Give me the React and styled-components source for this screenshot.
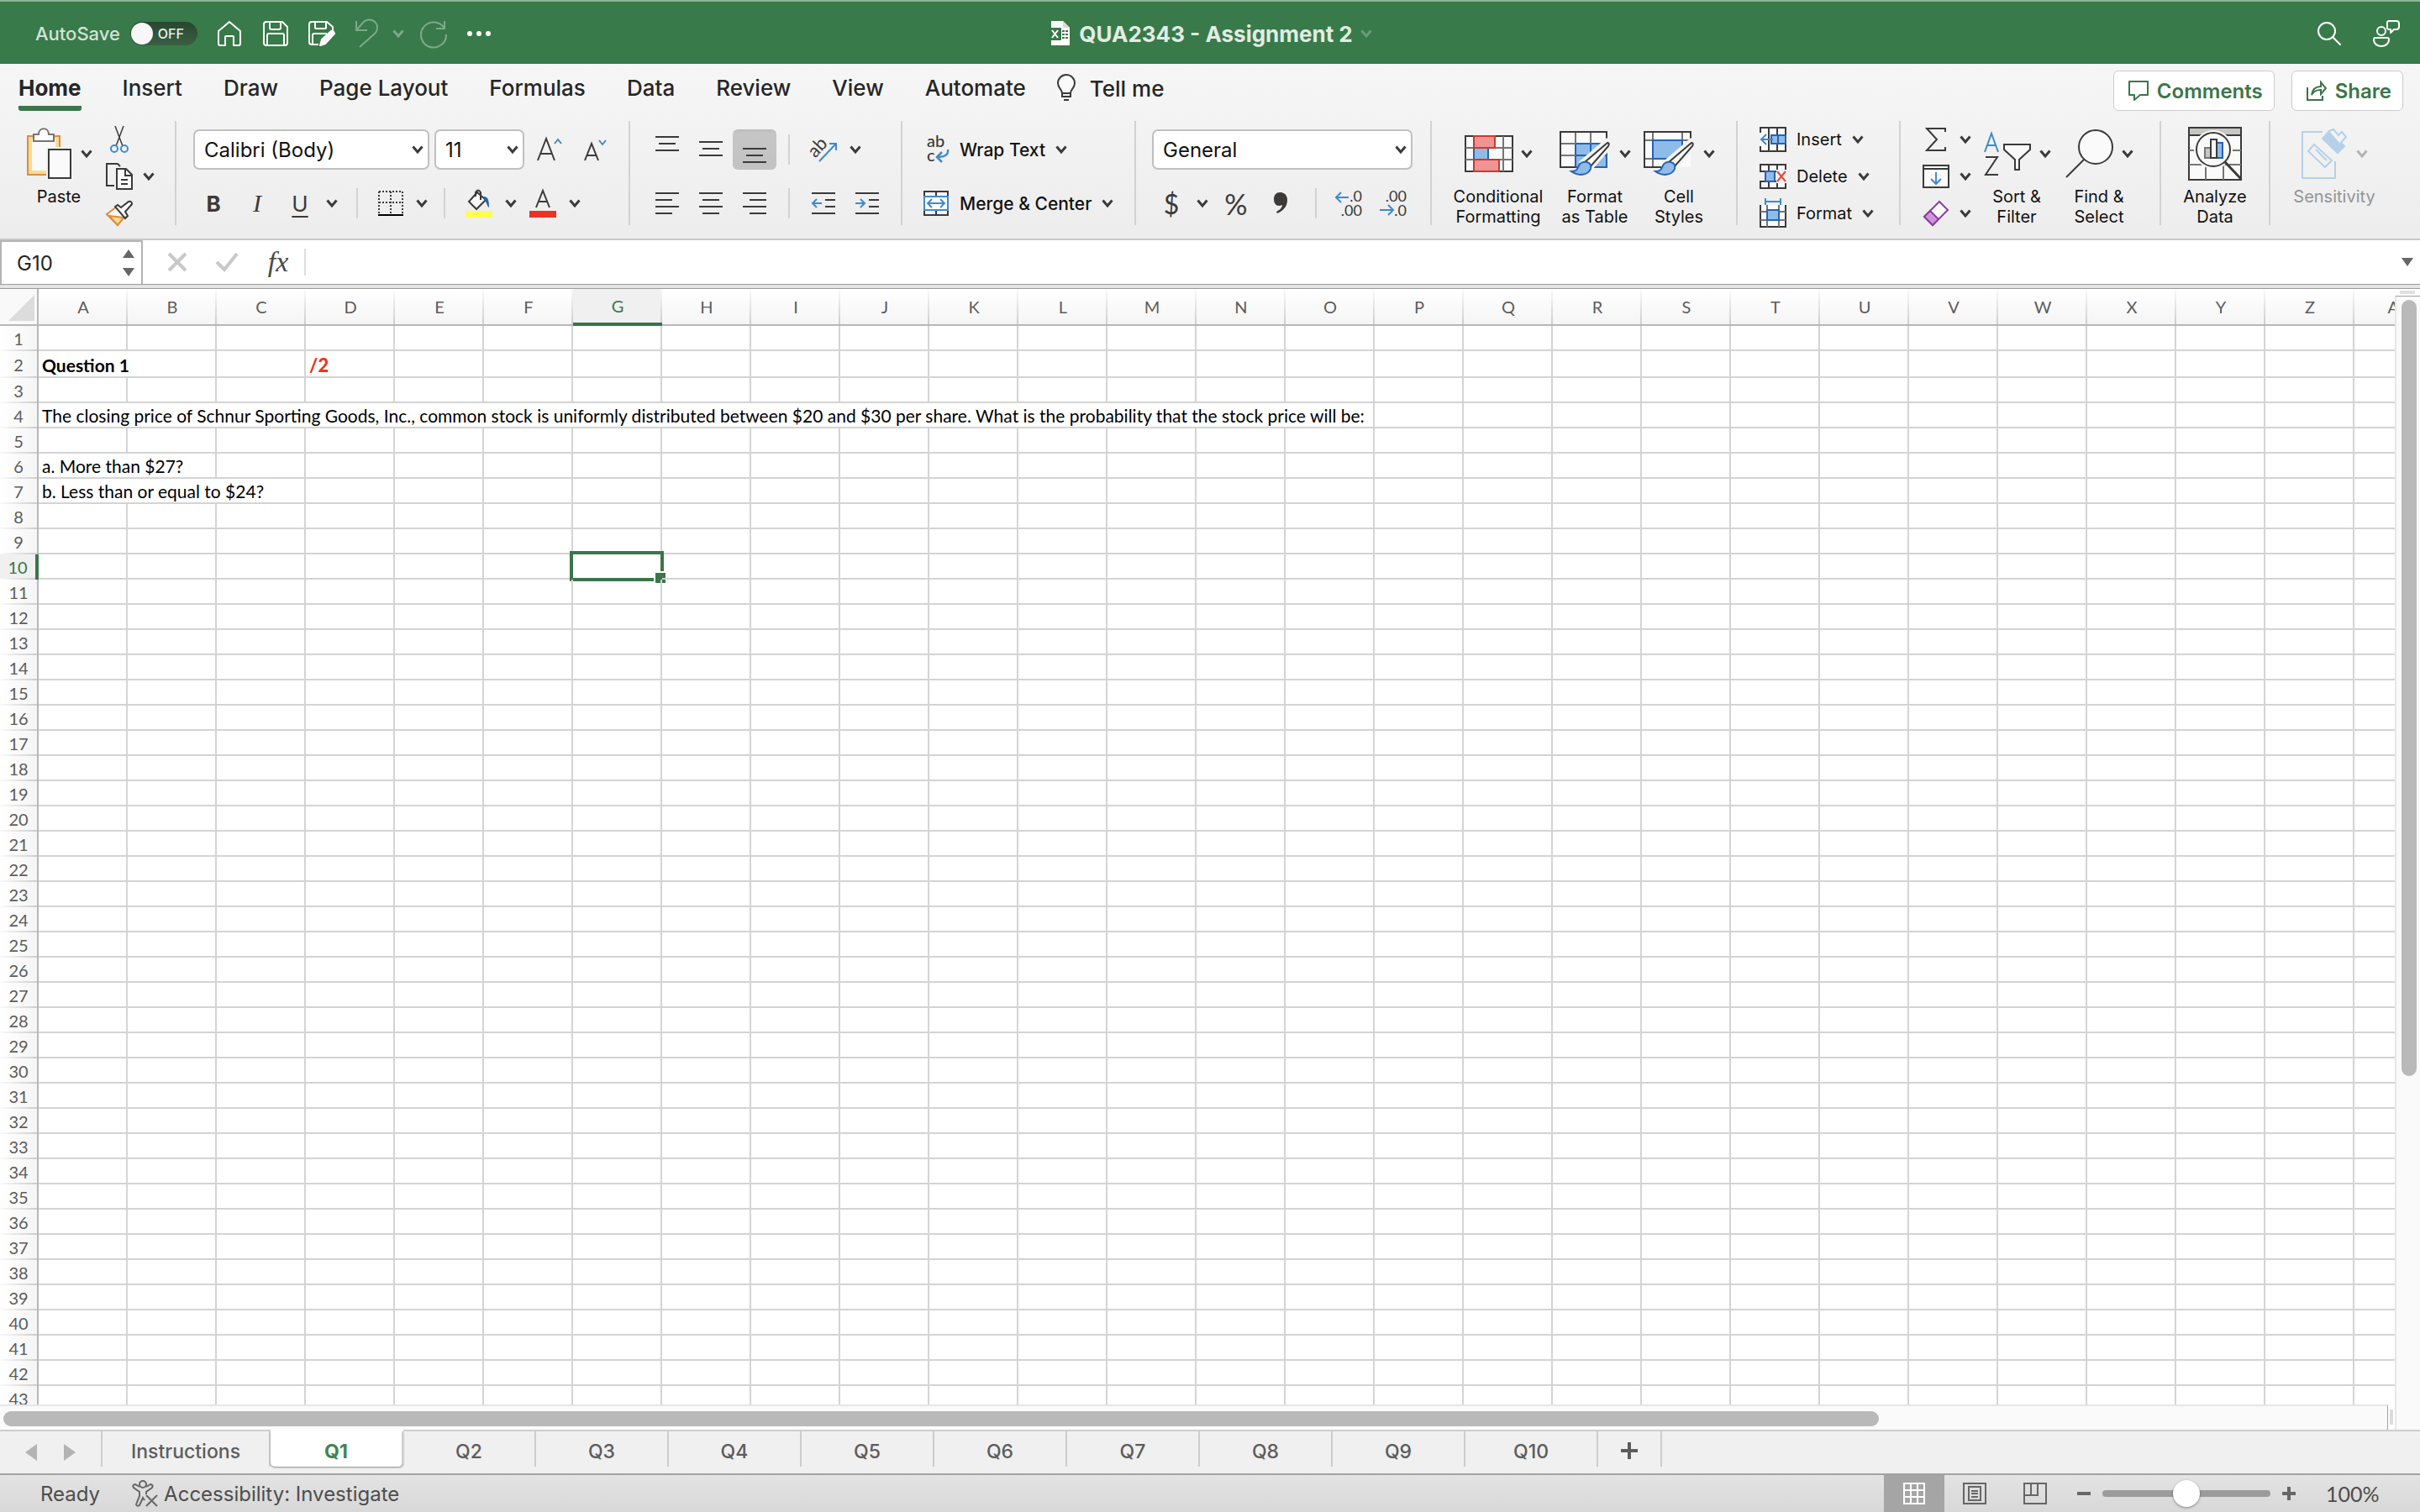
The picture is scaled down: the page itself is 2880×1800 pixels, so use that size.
import React, { useState } from 'react';
import styled, { createGlobalStyle, css } from 'styled-components';

const INK = '#3b3a39';
const BLUE = '#3f8acb';
const SKY = '#8fbbe8';
const NAVY = '#2563b0';
const GREEN = '#3b7549';

const TABS = ['Home', 'Insert', 'Draw', 'Page Layout', 'Formulas', 'Data', 'Review', 'View', 'Automate'];
const SHEETS = ['Instructions', 'Q1', 'Q2', 'Q3', 'Q4', 'Q5', 'Q6', 'Q7', 'Q8', 'Q9', 'Q10'];
const COLUMNS = [...'ABCDEFGHIJKLMNOPQRSTUVWXYZ', 'AA'];
const ROWS = Array.from({ length: 43 }, (_, i) => i + 1);

// text that runs over its neighbours takes their place with a span
const CELLS = {
  A2: { text: 'Question 1', span: 2, weight: 700 },
  D2: { text: '/2', span: 1, weight: 900, color: '#ea3323', size: 22 },
  A4: {
    text: 'The closing price of Schnur Sporting Goods, Inc., common stock is uniformly distributed between $20 and $30 per share. What is the probability that the stock price will be:',
    span: 15,
  },
  A6: { text: 'a. More than $27?', span: 2 },
  A7: { text: 'b. Less than or equal to $24?', span: 3 },
};

/* ---------- icons ---------- */

const Icon = ({ w = 32, h = 32, children, ...rest }) => (
  <Glyph width={w} height={h} viewBox={`0 0 ${w} ${h}`} fill="none" stroke={INK} strokeWidth="2" aria-hidden="true" {...rest}>
    {children}
  </Glyph>
);

const Chevron = ({ color = INK }) => (
  <Icon w={14} h={10} stroke={color} strokeWidth="3"><path d="M1.5 1.5L7 8l5.500-6.500" /></Icon>
);

const HomeIcon = () => (
  <Icon w={30} h={32} stroke="#fff" strokeLinejoin="round">
    <path d="M2 13L15 2l13 11v15a2 2 0 0 1-2 2h-6V20a1 1 0 0 0-1-1h-8a1 1 0 0 0-1 1v10H4a2 2 0 0 1-2-2z" />
  </Icon>
);

const SaveIcon = () => (
  <Icon w={30} h={30} stroke="#fff" strokeLinejoin="round">
    <path d="M4 1h19l6 6v19a3 3 0 0 1-3 3H4a3 3 0 0 1-3-3V4a3 3 0 0 1 3-3z" />
    <path d="M8 1v7a2 2 0 0 0 2 2h9a2 2 0 0 0 2-2V1M5 29V17a2 2 0 0 1 2-2h16a2 2 0 0 1 2 2v12" />
  </Icon>
);

const SaveEditIcon = () => (
  <Icon w={32} h={32} stroke="#fff" strokeLinejoin="round">
    <path d="M12 29H4a3 3 0 0 1-3-3V5a3 3 0 0 1 3-3h18l7 6v4" />
    <path d="M8 2v7a1 1 0 0 0 1 1h11a1 1 0 0 0 1-1V2M5 29V18a2 2 0 0 1 2-2h15" />
    <path d="M14 30l2-7L27 13q3-1 4 3L20 28z" fill="#fff" />
  </Icon>
);

const UndoIcon = () => (
  <Icon w={28} h={34} stroke="#7fa98a"><path d="M2 2v11h13M2 13L10 4a9.500 9.500 0 0 1 15 12L6 33" /></Icon>
);

const RedoIcon = () => (
  <Icon w={34} h={34} stroke="#7fa98a"><path d="M30 2v9H20M30 11a15 15 0 1 0 2 7" /></Icon>
);

const DotsIcon = () => (
  <Icon w={28} h={8} stroke="none" fill="#fff"><circle cx="3" cy="4" r="3" /><circle cx="14" cy="4" r="3" /><circle cx="25" cy="4" r="3" /></Icon>
);

const WorkbookIcon = () => (
  <Icon w={28} h={32} stroke="none">
    <path d="M4 1h14l8 8v21H4z" fill="#fff" />
    <path d="M18 1v8h8z" fill="#cfe0d3" />
    <path d="M17 12h3v2h-3zM21 12h3v2h-3zM17 16h3v2h-3zM21 16h3v2h-3zM17 20h3v2h-3zM21 20h3v2h-3z" fill={GREEN} />
    <rect x="1" y="9" width="15" height="15" rx="1" fill="#37784a" />
    <path d="M5 12l7 9M12 12l-7 9" stroke="#fff" strokeWidth="2" />
  </Icon>
);

const SearchIcon = () => (
  <Icon w={30} h={30} stroke="#fff" strokeLinecap="round"><circle cx="12" cy="12" r="10" /><path d="M19 19l9 9" /></Icon>
);

const PresenceIcon = () => (
  <Icon w={34} h={34} stroke="#fff" strokeLinejoin="round">
    <circle cx="11" cy="14" r="5" />
    <path d="M4 22h14a2 2 0 0 1 2 2c0 5-4 8-9 8s-9-3-9-8a2 2 0 0 1 2-2z" />
    <path d="M20 2h9a3 3 0 0 1 3 3v4a3 3 0 0 1-3 3h-3l-4 4v-4h-2a2 2 0 0 1-2-2V4a2 2 0 0 1 2-2z" />
  </Icon>
);

const BulbIcon = () => (
  <Icon w={24} h={32}>
    <path d="M7 22c0-5-5-6-5-12a10 10 0 0 1 20 0c0 6-5 7-5 12z" fill="#fafafa" />
    <path d="M7 22v4h10v-4M9 30h6" />
  </Icon>
);

const CommentIcon = () => (
  <Icon w={26} h={26} stroke={GREEN} strokeLinejoin="round"><path d="M2 2h22v16h-9l-7 6v-6H2z" /></Icon>
);

const ShareIcon = () => (
  <Icon w={26} h={26} stroke={GREEN}>
    <path d="M2 9v15h18v-5" />
    <path d="M7 18c1-7 5-10 11-10V3l6 7-6 7v-5c-5 0-8 1-11 6z" />
  </Icon>
);

const PasteIcon = () => (
  <Icon w={56} h={62}>
    <path d="M2 10h38v46H2z" fill="#f6dc94" stroke="#e08b3e" />
    <path d="M7 14h28v37H7z" fill="#fafafa" stroke="none" />
    <path d="M9 8h6c0-9 12-9 12 0h6v8H9z" fill="#fff" stroke="#767574" />
    <path d="M24 23h32v39H24z" fill="#f2f2f2" stroke="none" />
    <path d="M27 26h26v34H27z" fill="#fafafa" />
  </Icon>
);

const CutIcon = () => (
  <Icon w={22} h={34}>
    <path d="M6 1l9 24M16 1L7 25" strokeWidth="1.500" />
    <circle cx="5" cy="28" r="4" stroke={BLUE} /><circle cx="17" cy="28" r="4" stroke={BLUE} />
  </Icon>
);

const CopyIcon = () => (
  <Icon w={32} h={34}>
    <path d="M10 28H1V2h13l3 3" />
    <path d="M13 8h11l7 7v17H13z" fill="#fafafa" /><path d="M23 8v8h8M18 21h8M18 26h8" />
  </Icon>
);

const PainterIcon = () => (
  <Icon w={32} h={32}>
    <path d="M13 8L1 17l13 13 9-11z" fill="#fafafa" stroke="#e08b3e" />
    <path d="M4 19l17 2-7 9z" fill="#f6dc94" stroke="#e08b3e" />
    <path d="M11 8l3-2 4 3 9-7q4-1 4 3l-8 9 3 5-3 3z" fill="#fafafa" />
  </Icon>
);

const Sign = styled.span`
  font: 400 ${(p) => p.$size}px Lato, sans-serif;
  color: ${INK};
`;

const GrowIcon = ({ down }) => (
  <Icon w={32} h={32} strokeWidth="2">
    <path d={down ? 'M3 29l8-20 8 20M6 23h10' : 'M2 29l10-26 10 26M6 21h12'} />
    <path d={down ? 'M20 5l4 5 4-5' : 'M22 9l4-5 4 5'} stroke={BLUE} />
  </Icon>
);

const BordersIcon = () => (
  <Icon w={32} h={32}>
    <path d="M2 2h28M2 15h28" strokeDasharray="2 2" /><path d="M2 2v26M16 2v26M30 2v26" strokeDasharray="2 2" />
    <path d="M1 30h30" stroke="#000" strokeWidth="2" />
  </Icon>
);

const FillIcon = () => (
  <Icon w={32} h={34}>
    <path d="M14 4L4 15l9 9 11-11z" fill="#fafafa" /><path d="M12 9V4q3-5 6 0v9" />
    <path d="M22 9c5 0 6 5 6 13-3-2-2-6-6-9z" fill={NAVY} stroke="none" />
    <path d="M0 26h32v8H0z" fill="#fffd54" stroke="none" />
  </Icon>
);

const FontColorIcon = () => (
  <Icon w={32} h={34}>
    <path d="M8 22L16 2l8 20M11 15h10" /><path d="M0 26h32v8H0z" fill="#ea3323" stroke="none" />
  </Icon>
);

const VAlignIcon = ({ y }) => (
  <Icon w={28} h={34}><path d={`M0 ${y}h28M4 ${y + 8}h20M0 ${y + 16}h28`} /></Icon>
);

const HAlignIcon = ({ x }) => (
  <Icon w={28} h={28}><path d={`M0 2h28M${x} 10h20M0 18h28M${x} 26h20`} /></Icon>
);

const IndentIcon = ({ right }) => (
  <Icon w={28} h={28}>
    <path d="M0 2h28M16 10h12M16 18h12M0 26h28" />
    <path d={right ? 'M0 14h11M6 9l5 5-5 5' : 'M12 14H1M6 9l-5 5 5 5'} stroke={BLUE} />
  </Icon>
);

const OrientIcon = () => (
  <Icon w={34} h={34}>
    <text x="2" y="24" fontSize="22" fontFamily="Lato, sans-serif" fill={INK} stroke="none" transform="rotate(-47 9 20)">ab</text>
    <path d="M12 31L32 10M24 10h8v8" stroke={BLUE} />
  </Icon>
);

const WrapIcon = () => (
  <Icon w={32} h={34}>
    <text fontSize="20" fontFamily="Lato, sans-serif" fill={INK} stroke="none">
      <tspan x="5" y="14">ab</tspan>
      <tspan x="5" y="31">c</tspan>
    </text>
    <path d="M30 17c1 6-3 9-13 9M23 20l-6 6 6 6" stroke={BLUE} strokeWidth="2.500" />
  </Icon>
);

const MergeIcon = () => (
  <Icon w={32} h={32}>
    <path d="M2 2h28v28H2zM16 2v28" fill="#fafafa" />
    <path d="M2 8h28v16H2z" fill="#fff" stroke={BLUE} />
    <path d="M6 16h20M11 11l-5 5 5 5M21 11l5 5-5 5" stroke={BLUE} />
  </Icon>
);

const DecimalIcon = ({ less }) => (
  <Icon w={36} h={34} stroke={BLUE}>
    <g fontSize="18" fontFamily="Lato, sans-serif" fill={INK} stroke="none" textAnchor="end">
      <text x="34" y="15">{less ? '.00' : '.0'}</text><text x="34" y="32">{less ? '.0' : '.00'}</text>
    </g>
    <path d={less ? 'M2 25h16M12 19l6 6-6 6' : 'M18 10H3M9 4l-6 6 6 6'} />
  </Icon>
);

const CommaIcon = () => (
  <Icon w={18} h={26} stroke="none" fill={INK}><path d="M8 0c6 0 9 4 9 9 0 8-5 13-12 16l-1-2c4-2 7-5 7-8-6 3-10-1-10-7 0-5 3-8 7-8z" /></Icon>
);

const ConditionalIcon = () => (
  <Icon w={58} h={46}>
    <path d="M1 2h56v42H1z" fill="#fafafa" />
    <path d="M1 16h56M1 30h56M46 2v42" stroke="#767574" />
    <path d="M11 16h17v14H11z" fill={SKY} stroke={NAVY} />
    <path d="M11 2h25v14H11zM11 30h30v14H11z" fill="#f19394" stroke="#c93a2c" />
  </Icon>
);

const Brush = () => (
  <>
    <path d="M28 38L57 13q4 0 2 6L36 45z" fill="#fafafa" stroke="#f2f2f2" strokeWidth="7" />
    <path d="M30 38L57 15q3 0 1 4L37 43z" fill="#fafafa" />
    <path d="M14 49c7 0 7-3 9-7 3-7 17-5 14 4-3 8-15 9-23 3z" fill={SKY} stroke={NAVY} />
  </>
);

const FormatTableIcon = () => (
  <Icon w={62} h={56}>
    <path d="M1 2h55v42H1z" fill="#fafafa" />
    <path d="M19 16h37v28H19z" fill={SKY} stroke={NAVY} />
    <path d="M1 16h18M1 30h18M19 2v14M37 2v14" stroke="#767574" /><path d="M19 30h37M37 16v28" stroke={NAVY} />
    <path d="M1 2h55v8M1 2v42h18" />
    <Brush />
  </Icon>
);

const CellStylesIcon = () => (
  <Icon w={62} h={56}>
    <path d="M1 2h55v42H1z" fill="#fafafa" stroke="none" />
    <path d="M1 12h55M11 2v42M46 2v10M1 34h20" stroke="#767574" />
    <path d="M11 12h35v22H11z" fill={SKY} stroke={NAVY} />
    <path d="M56 12V2H1v42h20" />
    <Brush />
  </Icon>
);

const InsertIcon = () => (
  <Icon>
    <path d="M1 8V2h30v28H1v-6M11 2v28M21 2v28" fill="#fafafa" />
    <path d="M14 11h17v10H14z" fill={SKY} stroke={NAVY} />
    <path d="M22 11v10" stroke={NAVY} />
    <path d="M2 16h14M8 10l-6 6 6 6" stroke={BLUE} />
  </Icon>
);

const DeleteIcon = () => (
  <Icon>
    <path d="M1 10V2h30v8H1zM1 22v8h30v-8zM11 2v8M21 2v8M11 22v8M21 22v8" fill="#fafafa" />
    <path d="M7 10h11v12H7z" fill={SKY} stroke={NAVY} />
    <path d="M20 8h12v16H20z" fill="#f2f2f2" stroke="none" />
    <path d="M21 10l10 12M31 10L21 22" stroke="#e0483e" />
  </Icon>
);

const FormatIcon = () => (
  <Icon w={32} h={36}>
    <path d="M1 8v26h30V8" fill="#fafafa" /><path d="M1 16h30M1 26h30M9 8v26M23 8v26" stroke="#767574" />
    <path d="M9 14h14v12H9z" fill={SKY} stroke={NAVY} /><path d="M7 4h18M7 0v8M25 0v8" stroke={BLUE} />
  </Icon>
);

const SumIcon = () => (
  <Icon w={26} h={30}><path d="M24 6V2H2l12 13L2 28h22v-4" /></Icon>
);

const FillDownIcon = () => (
  <Icon w={32} h={30}>
    <path d="M1 2h30v26H1z" fill="#fafafa" /><path d="M1 6h30" />
    <path d="M16 10v14M10 18l6 6 6-6" stroke={BLUE} />
  </Icon>
);

const EraserIcon = () => (
  <Icon w={32} h={32} stroke="#8b3fa0">
    <path d="M2 20L20 2l10 10-18 18z" fill="#fafafa" /><path d="M2 20l7-7 10 10-7 7z" fill="#cf95dc" />
  </Icon>
);

const SortIcon = () => (
  <Icon w={58} h={56}>
    <path d="M2 26l8-22 8 22M5 18h10" stroke={BLUE} />
    <path d="M3 32h14L3 53h15" />
    <path d="M25 17h31v6L43 35v12h-5V35L25 23z" fill="#fafafa" />
  </Icon>
);

const FindIcon = () => (
  <Icon w={58} h={60}><circle cx="36" cy="22" r="20" fill="#fafafa" /><path d="M22 37L1 58" /></Icon>
);

const AnalyzeIcon = () => (
  <Icon w={64} h={66}>
    <path d="M1 2h62v62H1z" fill="#fafafa" /><path d="M1 2h62v9H1z" fill="#c6c6c4" />
    <path d="M1 29h62M1 46h62M21 46v18M42 46v18" stroke="#767574" />
    <circle cx="30" cy="28" r="23" fill="#fafafa" stroke="none" />
    <circle cx="30" cy="28" r="20" fill="#fafafa" />
    <path d="M20 26h7v12h-7z" fill="#c6c6c4" stroke="#767574" /><path d="M34 20h7v18h-7z" fill={SKY} stroke={NAVY} />
    <path d="M27 16h7v22h-7z" fill="#fafafa" />
    <path d="M44 43l19 20" strokeWidth="3" />
  </Icon>
);

const SensitivityIcon = () => (
  <Icon w={56} h={62} stroke="#b5d0e8">
    <path d="M40 40v20H1V5h24" />
    <path d="M15 20l21 19-8 8L8 28zM17 26l13 13" />
    <path d="M25 13l8-9 18 18-8 8z" fill="#b5d0e8" /><path d="M33 4l5-2 6 7 4-4 5 6-7 8" fill="#f2f2f2" />
  </Icon>
);

const AccessIcon = () => (
  <Icon w={32} h={32} stroke="#666">
    <circle cx="13" cy="5" r="4" />
    <path d="M9 8L4 5q-4 1-2 4l7 5v5L5 29q1 3 4 1l4-9 2 3M17 8l5-3q4 1 2 4l-7 5v3M17 18l13 13M30 18L17 31" />
  </Icon>
);

const GridViewIcon = () => (
  <Icon w={28} h={28} stroke="#fff"><path d="M2 2h24v24H2zM2 10h24M2 18h24M10 2v24M18 2v24" /></Icon>
);

const PageViewIcon = () => (
  <Icon w={28} h={28} stroke="#666"><path d="M1 2h26v24H1zM7 6h14v16H7zM10 11h8M10 14h8M10 18h8" /></Icon>
);

const BreakViewIcon = () => (
  <Icon w={28} h={28} stroke="#666"><path d="M1 2h26v24H1zM1 16h16V2M9 2v14" /></Icon>
);

const Triangle = ({ d, w = 14, h = 10, color = '#666' }) => (
  <Icon w={w} h={h} stroke="none" fill={color}><path d={d} /></Icon>
);

/* ---------- pieces ---------- */

const Select = ({ label, value, width }) => (
  <Field $w={width}>
    <select aria-label={label} defaultValue={value}><option>{value}</option></select>
    <Chevron />
  </Field>
);

const Big = ({ icon, label, width = 88, caret = true, disabled }) => (
  <BigButton $w={width} disabled={disabled}>
    <BigIcon>{icon}{caret && <Chevron color={disabled ? '#b3b3b3' : INK} />}</BigIcon>
    <span>{label}</span>
  </BigButton>
);

const Caret = ({ label, width = 24 }) => <Tool $w={width} aria-label={label}><Chevron /></Tool>;

const TitleArea = () => (
  <TitleBar>
    <QuickBar>
      <AutoSave>
        AutoSave
        <Switch><input type="checkbox" role="switch" /><span>OFF</span></Switch>
      </AutoSave>
      <BarButton $w={56} aria-label="Home"><HomeIcon /></BarButton>
      <BarButton $w={54} aria-label="Save"><SaveIcon /></BarButton>
      <BarButton $w={56} aria-label="Save as"><SaveEditIcon /></BarButton>
      <BarButton $w={50} aria-label="Undo"><UndoIcon /></BarButton>
      <BarButton $w={26} aria-label="Undo list"><Chevron color="#7fa98a" /></BarButton>
      <BarButton $w={58} aria-label="Redo"><RedoIcon /></BarButton>
      <BarButton $w={50} aria-label="More"><DotsIcon /></BarButton>
    </QuickBar>
    <DocTitle>
      <WorkbookIcon />
      <h1>QUA2343 - Assignment 2</h1>
      <Chevron color="#6b9c78" />
    </DocTitle>
    <RightBar>
      <BarButton $w={68} aria-label="Search"><SearchIcon /></BarButton>
      <BarButton $w={68} aria-label="Collaborators"><PresenceIcon /></BarButton>
    </RightBar>
  </TitleBar>
);

const RibbonArea = () => {
  const [tab, setTab] = useState('Home');

  return (
    <Ribbon>
      <TabRow>
        <TabList>
          {TABS.map((name) => (
            <Tab key={name} $active={name === tab} onClick={() => setTab(name)}>{name}</Tab>
          ))}
        </TabList>
        <TellMe><BulbIcon />Tell me</TellMe>
        <TabActions>
          <ActionButton><CommentIcon />Comments</ActionButton>
          <ActionButton><ShareIcon />Share</ActionButton>
        </TabActions>
      </TabRow>

      <Groups>
        <Group $w={208} $pad={22} $gap={8}>
          <Big icon={<PasteIcon />} label="Paste" width={96} />
          <ToolStack>
            <StackRow aria-label="Cut"><Slot><CutIcon /></Slot></StackRow>
            <StackRow aria-label="Copy"><Slot><CopyIcon /></Slot><Chevron /></StackRow>
            <StackRow aria-label="Format painter"><Slot><PainterIcon /></Slot></StackRow>
          </ToolStack>
        </Group>
        <Divider $tall />

        <Group $w={538} $pad={20}>
          <Rows>
            <ToolRow>
              <Select label="Font" value="Calibri (Body)" width={281} />
              <FieldGap />
              <Select label="Font size" value="11" width={107} />
              <Tool $w={60} aria-label="Increase font size"><GrowIcon /></Tool>
              <Tool $w={50} aria-label="Decrease font size"><GrowIcon down /></Tool>
            </ToolRow>
            <ToolRow>
              <Tool $w={48}><b>B</b></Tool>
              <Tool $w={56}><Serif>I</Serif></Tool>
              <Tool $w={46}><u>U</u></Tool>
              <Caret label="Underline style" width={30} />
              <Divider />
              <Tool $w={50} aria-label="Borders"><BordersIcon /></Tool>
              <Caret label="Border list" />
              <Divider />
              <Tool $w={52} aria-label="Fill color"><FillIcon /></Tool>
              <Caret label="Fill colors" />
              <Tool $w={52} aria-label="Font color"><FontColorIcon /></Tool>
              <Caret label="Font colors" />
            </ToolRow>
          </Rows>
        </Group>
        <Divider $tall />

        <Group $w={322} $pad={18}>
          <Rows>
            <ToolRow>
              <Tool $w={52} aria-label="Top align"><VAlignIcon y={2} /></Tool>
              <Tool $w={52} aria-label="Middle align"><VAlignIcon y={8} /></Tool>
              <Tool $w={52} $on aria-label="Bottom align"><VAlignIcon y={16} /></Tool>
              <Divider />
              <Tool $w={52} aria-label="Orientation"><OrientIcon /></Tool>
              <Caret label="Orientation list" />
            </ToolRow>
            <ToolRow>
              <Tool $w={52} aria-label="Align left"><HAlignIcon x={0} /></Tool>
              <Tool $w={52} aria-label="Center"><HAlignIcon x={4} /></Tool>
              <Tool $w={52} aria-label="Align right"><HAlignIcon x={8} /></Tool>
              <Divider />
              <Tool $w={52} aria-label="Decrease indent"><IndentIcon /></Tool>
              <Tool $w={52} aria-label="Increase indent"><IndentIcon right /></Tool>
            </ToolRow>
          </Rows>
        </Group>
        <Divider $tall />

        <Group $w={276} $pad={24}>
          <Rows>
            <TextTool><Slot><WrapIcon /></Slot>Wrap Text<Chevron /></TextTool>
            <TextTool><Slot><MergeIcon /></Slot>Merge &amp; Center<Chevron /></TextTool>
          </Rows>
        </Group>
        <Divider $tall />

        <Group $w={350} $pad={19}>
          <Rows>
            <ToolRow><Select label="Number format" value="General" width={310} /></ToolRow>
            <ToolRow>
              <Tool $w={46} aria-label="Currency"><Sign $size={32}>$</Sign></Tool>
              <Caret label="Currency list" width={28} />
              <Tool $w={52} aria-label="Percent"><Sign $size={34}>%</Sign></Tool>
              <Tool $w={54} aria-label="Comma style"><CommaIcon /></Tool>
              <Divider />
              <Tool $w={48} aria-label="Increase decimal"><DecimalIcon /></Tool>
              <Tool $w={58} aria-label="Decrease decimal"><DecimalIcon less /></Tool>
            </ToolRow>
          </Rows>
        </Group>
        <Divider $tall />

        <Group $w={362} $pad={20}>
          <Big icon={<ConditionalIcon />} label="Conditional Formatting" width={118} />
          <Big icon={<FormatTableIcon />} label="Format as Table" />
          <Big icon={<CellStylesIcon />} label={<>Cell<br />Styles</>} />
        </Group>
        <Divider $tall />

        <Group $w={192} $pad={26}>
          <ToolStack>
            <StackRow><Slot><InsertIcon /></Slot>Insert<Chevron /></StackRow>
            <StackRow><Slot><DeleteIcon /></Slot>Delete<Chevron /></StackRow>
            <StackRow><Slot><FormatIcon /></Slot>Format<Chevron /></StackRow>
          </ToolStack>
        </Group>
        <Divider $tall />

        <Group $w={308} $pad={26} $gap={10}>
          <ToolStack>
            <StackRow aria-label="AutoSum"><Slot><SumIcon /></Slot><Chevron /></StackRow>
            <StackRow aria-label="Fill"><Slot><FillDownIcon /></Slot><Chevron /></StackRow>
            <StackRow aria-label="Clear"><Slot><EraserIcon /></Slot><Chevron /></StackRow>
          </ToolStack>
          <Big icon={<SortIcon />} label={<>Sort &amp;<br />Filter</>} />
          <Big icon={<FindIcon />} label={<>Find &amp;<br />Select</>} />
        </Group>
        <Divider $tall />

        <Group $w={128} $pad={20}>
          <Big icon={<AnalyzeIcon />} label="Analyze Data" caret={false} />
        </Group>
        <Divider $tall />

        <Group $w={160} $pad={20}>
          <Big icon={<SensitivityIcon />} label="Sensitivity" width={112} disabled />
        </Group>
      </Groups>
    </Ribbon>
  );
};

const FormulaArea = () => (
  <FormulaBar>
    <NameBox>
      <input aria-label="Name box" defaultValue="G10" />
      <Steppers><Triangle d="M7 0l7 10H0z" /><Triangle d="M0 0h14L7 10z" /></Steppers>
    </NameBox>
    <BarButton $w={58} aria-label="Cancel"><Icon w={24} h={24} stroke="#c8c8c8" strokeWidth="4"><path d="M2 2l20 20M22 2L2 22" /></Icon></BarButton>
    <BarButton $w={60} aria-label="Enter"><Icon w={28} h={24} stroke="#c8c8c8" strokeWidth="4"><path d="M2 12l9 9L26 2" /></Icon></BarButton>
    <BarButton $w={62} aria-label="Insert function"><Fx>fx</Fx></BarButton>
    <FormulaInput aria-label="Formula" />
    <BarButton $w={30} aria-label="Expand"><Triangle d="M0 0h14L7 10z" /></BarButton>
  </FormulaBar>
);

const SheetRow = ({ row }) => {
  const cells = [];
  for (let i = 0; i < COLUMNS.length; i++) {
    const key = COLUMNS[i] + row;
    const cell = CELLS[key];
    cells.push(
      <Cell key={key} colSpan={cell?.span} $weight={cell?.weight} $color={cell?.color} $size={cell?.size}>
        {cell?.text}
        {key === 'G10' && <Selection />}
      </Cell>
    );
    if (cell) i += cell.span - 1;
  }
  return (
    <SheetLine $h={row === 2 ? 32 : 30}>
      <RowHead scope="row" $on={row === 10}>{row}</RowHead>
      {cells}
    </SheetLine>
  );
};

const App = () => {
  const [sheet, setSheet] = useState('Q1');

  return (
    <Page>
      <GlobalStyle />
      <TitleArea />
      <RibbonArea />
      <FormulaArea />
      <SplitBar />

      <Workspace>
        <SheetPane>
          <GridClip>
            <Grid>
              <colgroup>
                <col width="46" />
                {COLUMNS.map((c) => <col key={c} width="106" />)}
              </colgroup>
              <thead>
                <tr>
                  <Corner><Icon w={32} h={32} stroke="none" fill="#dcdcdc"><path d="M31 0v31H0z" /></Icon></Corner>
                  {COLUMNS.map((c) => <ColHead key={c} scope="col" $on={c === 'G'}>{c}</ColHead>)}
                </tr>
              </thead>
              <tbody>{ROWS.map((r) => <SheetRow key={r} row={r} />)}</tbody>
            </Grid>
          </GridClip>
          <HScroll><HTrack><HThumb /></HTrack><HHandle /></HScroll>
        </SheetPane>
        <VScroll><VHandle /><VTrack><VThumb /></VTrack></VScroll>
      </Workspace>

      <SheetTabs>
        <SheetNav>
          <button aria-label="Previous sheet"><Triangle w={14} h={20} color="#b3b3b3" d="M14 0v20L0 10z" /></button>
          <button aria-label="Next sheet"><Triangle w={14} h={20} color="#b3b3b3" d="M0 0v20l14-10z" /></button>
        </SheetNav>
        {SHEETS.map((name) => (
          <SheetTab key={name} $wide={name === 'Instructions'} $active={name === sheet} onClick={() => setSheet(name)}>
            {name}
          </SheetTab>
        ))}
        <AddSheet aria-label="Add sheet">
          <Icon w={20} h={20} stroke="#5c5c5c" strokeWidth="4"><path d="M10 0v20M0 10h20" /></Icon>
        </AddSheet>
      </SheetTabs>

      <StatusBar>
        <Ready>Ready</Ready>
        <Access><AccessIcon />Accessibility: Investigate</Access>
        <ViewButton $on aria-label="Normal view"><GridViewIcon /></ViewButton>
        <ViewButton aria-label="Page layout view"><PageViewIcon /></ViewButton>
        <ViewButton aria-label="Page break view"><BreakViewIcon /></ViewButton>
        <ZoomButton aria-label="Zoom out"><Icon w={16} h={16} stroke="#666" strokeWidth="4"><path d="M0 8h16" /></Icon></ZoomButton>
        <ZoomSlider type="range" aria-label="Zoom" min="0" max="200" defaultValue="100" />
        <ZoomButton aria-label="Zoom in"><Icon w={16} h={16} stroke="#666" strokeWidth="4"><path d="M0 8h16M8 0v16" /></Icon></ZoomButton>
        <Percent>100%</Percent>
      </StatusBar>
    </Page>
  );
};

/* ---------- styles ---------- */

const GlobalStyle = createGlobalStyle`
  * { box-sizing: border-box; }
  body {
    margin: 0;
    font-family: Inter, "Liberation Sans", sans-serif;
    color: #262626;
    background: #fff;
  }
  button, input, select {
    font: inherit;
    color: inherit;
    margin: 0;
    padding: 0;
    border: 0;
    background: none;
    outline: none;
  }
`;

const Page = styled.div`
  display: flex;
  flex-direction: column;
  height: 100vh;
  overflow: hidden;
`;

const Glyph = styled.svg`
  display: block;
  flex: none;
  overflow: visible;
`;

const TitleBar = styled.header`
  display: grid;
  grid-template-columns: 1fr auto 1fr;
  align-items: center;
  height: 76px;
  padding-top: 2px;
  flex: none;
  border-top: 2px solid #8fb39a;
  background: #387a49;
  color: #e2ece4;
`;

const QuickBar = styled.div`
  display: flex;
  align-items: center;
  padding-left: 42px;
`;

const BarButton = styled.button`
  display: flex;
  align-items: center;
  justify-content: center;
  flex: none;
  width: ${(p) => p.$w}px;
`;

const AutoSave = styled.label`
  display: flex;
  align-items: center;
  gap: 12px;
  margin-right: 10px;
  font-size: 22px;
  font-weight: 500;
  color: #d3e2d7;
`;

const Switch = styled.span`
  display: grid;
  align-items: center;
  width: 80px;

  input {
    appearance: none;
    grid-area: 1 / 1;
    height: 28px;
    padding: 1px;
    border-radius: 14px;
    background: linear-gradient(#27472f, #3a5f44);
  }

  input::before {
    content: '';
    display: block;
    width: 26px;
    height: 26px;
    border-radius: 50%;
    background: #f7f7f7;
  }

  span {
    grid-area: 1 / 1;
    justify-self: end;
    padding-right: 16px;
    font-size: 16px;
    color: #e8efe9;
    pointer-events: none;
  }
`;

const DocTitle = styled.div`
  display: flex;
  align-items: center;
  gap: 9px;

  h1 {
    margin: 0;
    font-size: 26px;
    font-weight: 700;
  }
`;

const RightBar = styled.div`
  display: flex;
  justify-content: flex-end;
  padding-right: 6px;
`;

const Ribbon = styled.section`
  flex: none;
  border-bottom: 2px solid #c8c8c8;
  background: linear-gradient(#f6f6f6, #ededed);
`;

const TabRow = styled.nav`
  display: flex;
  gap: 36px;
  height: 68px;
  padding: 0 20px 0 22px;
`;

const TabList = styled.div`
  display: flex;
  gap: 49px;
`;

const Tab = styled.button`
  height: 56px;
  padding-top: 7px;
  border-bottom: 6px solid ${(p) => (p.$active ? GREEN : 'transparent')};
  border-radius: 3px;
  font-size: 26px;
  font-weight: ${(p) => (p.$active ? 700 : 500)};
`;

const TellMe = styled.button`
  display: flex;
  align-items: center;
  gap: 16px;
  height: 58px;
  font-size: 26px;
  font-weight: 500;
`;

const TabActions = styled.div`
  display: flex;
  gap: 20px;
  margin-left: auto;
  padding-top: 8px;
`;

const ActionButton = styled.button`
  display: flex;
  align-items: center;
  gap: 9px;
  height: 48px;
  padding: 0 13px 0 16px;
  border: 1px solid #cbcbcb;
  border-radius: 6px;
  background: #fff;
  font-size: 24px;
  font-weight: 600;
  color: ${GREEN};
`;

const Groups = styled.div`
  display: flex;
  height: 140px;
`;

const Group = styled.div`
  display: flex;
  gap: ${(p) => p.$gap || 12}px;
  flex: none;
  width: ${(p) => p.$w}px;
  padding-left: ${(p) => p.$pad}px;
`;

const Divider = styled.span`
  flex: none;
  width: 2px;
  background: #d2d2d2;
  ${(p) => (p.$tall
    ? css`height: 124px;`
    : css`height: 36px; margin: 0 14px;`)}
`;

const Rows = styled.div`
  display: flex;
  flex-direction: column;
  gap: 16px;
  padding-top: 10px;
`;

const ToolRow = styled.div`
  display: flex;
  align-items: center;
  height: 48px;
`;

const FieldGap = styled.span`
  width: 6px;
`;

const Field = styled.span`
  display: grid;
  align-items: center;
  width: ${(p) => p.$w}px;
  height: 48px;

  select {
    appearance: none;
    grid-area: 1 / 1;
    height: 48px;
    padding-left: 11px;
    border: 2px solid #c0c0c0;
    border-radius: 7px;
    background: #fff;
    font-size: 24px;
    color: #111;
  }

  svg {
    grid-area: 1 / 1;
    justify-self: end;
    margin-right: 7px;
    pointer-events: none;
  }
`;

const Tool = styled.button`
  display: flex;
  align-items: center;
  justify-content: center;
  flex: none;
  width: ${(p) => p.$w}px;
  height: 48px;
  font-size: 26px;
  color: ${INK};

  ${(p) => p.$on && css`
    border-radius: 6px;
    background: linear-gradient(#bcbcbc, #c6c6c6 10%, #c2c2c2);
  `}

  u {
    text-underline-offset: 5px;
  }
`;

const Serif = styled.i`
  font-family: "Liberation Serif", serif;
  font-size: 30px;
`;

const Slot = styled.span`
  display: flex;
  justify-content: center;
  width: 32px;
`;

const TextTool = styled.button`
  display: flex;
  align-items: center;
  gap: 12px;
  height: 48px;
  font-size: 21px;
  font-weight: 500;
  color: #111;
`;

const ToolStack = styled.div`
  display: flex;
  flex-direction: column;
`;

const StackRow = styled.button`
  display: flex;
  align-items: center;
  gap: 12px;
  height: 44px;
  font-size: 20px;
  color: #111;
`;

const BigButton = styled.button`
  display: flex;
  flex-direction: column;
  align-items: center;
  gap: 6px;
  flex: none;
  width: ${(p) => p.$w}px;
  height: 130px;
  padding-top: 6px;
  font-size: 20px;
  line-height: 24px;
  color: ${(p) => (p.disabled ? '#949494' : '#111')};
`;

const BigIcon = styled.span`
  display: flex;
  align-items: center;
  gap: 9px;
  height: 66px;
`;

const FormulaBar = styled.div`
  display: flex;
  align-items: center;
  flex: none;
  height: 52px;
  background: #fff;
`;

const NameBox = styled.div`
  display: flex;
  align-items: center;
  align-self: stretch;
  width: 170px;
  margin-right: 12px;
  padding: 0 8px 0 18px;
  border: 2px solid #b4b4b4;
  border-bottom: 0;

  input {
    flex: 1;
    min-width: 0;
    font-size: 24px;
  }
`;

const Steppers = styled.span`
  display: flex;
  flex-direction: column;
  gap: 12px;
`;

const Fx = styled.i`
  font-family: "Liberation Serif", serif;
  font-size: 34px;
  color: #4a4a4a;
`;

const FormulaInput = styled.input`
  flex: 1;
  height: 32px;
  margin-right: 6px;
  border-left: 2px solid #dedede;
`;

const SplitBar = styled.div`
  flex: none;
  height: 6px;
  border: solid #9c9c9c;
  border-width: 1px 0;
  background: #e4e4e4;
`;

const Workspace = styled.main`
  display: flex;
  flex: 1;
  min-height: 0;
`;

const SheetPane = styled.div`
  display: flex;
  flex-direction: column;
  flex: 1;
  min-width: 0;
`;

const GridClip = styled.div`
  flex: 1;
  overflow: hidden;
`;

const Grid = styled.table`
  width: 2908px;
  table-layout: fixed;
  border-spacing: 0;
  font-family: Lato, "Noto Sans", sans-serif;
`;

const Corner = styled.td`
  height: 44px;
  padding: 4px 0 0 10px;
  border-right: 2px solid #b8b8b8;
  border-bottom: 2px solid #b8b8b8;
  background: #f9f9f9;
`;

const ColHead = styled.th`
  height: 44px;
  padding: 0;
  border-bottom: ${(p) => (p.$on ? `4px solid ${GREEN}` : '2px solid #b8b8b8')};
  background:
    linear-gradient(#fafafa, #cdcdcd) right / 2px 100% no-repeat,
    ${(p) => (p.$on ? '#f0f0f0' : 'linear-gradient(#fff, #f5f5f5)')};
  font-size: 20px;
  font-weight: 400;
  color: ${(p) => (p.$on ? GREEN : '#5c5c5c')};
`;

const SheetLine = styled.tr`
  height: ${(p) => p.$h}px;
`;

const RowHead = styled.th`
  padding: 0;
  border-right: ${(p) => (p.$on ? `4px solid ${GREEN}` : '2px solid #b8b8b8')};
  background:
    linear-gradient(90deg, #fafafa, #cdcdcd) bottom / 100% 2px no-repeat,
    ${(p) => (p.$on ? '#f0f0f0' : 'linear-gradient(90deg, #fff, #f5f5f5)')};
  font-size: 20px;
  font-weight: 400;
  line-height: 28px;
  color: ${(p) => (p.$on ? GREEN : '#5c5c5c')};
`;

const Cell = styled.td`
  position: relative;
  padding: 0 0 0 4px;
  border: solid #d4d4d4;
  border-width: 0 2px 2px 0;
  vertical-align: bottom;
  white-space: nowrap;
  font-size: ${(p) => p.$size || 21}px;
  font-weight: ${(p) => p.$weight || 400};
  line-height: 26px;
  color: ${(p) => p.$color || '#000'};
`;

const Selection = styled.div`
  position: absolute;
  inset: -4px;
  border: 4px solid ${GREEN};

  &::after {
    content: '';
    position: absolute;
    right: -6px;
    bottom: -6px;
    width: 12px;
    height: 12px;
    border: solid #fff;
    border-width: 2px 0 0 2px;
    background: ${GREEN};
  }
`;

const HScroll = styled.div`
  display: flex;
  flex: none;
  height: 30px;
`;

const HTrack = styled.div`
  flex: 1;
  padding: 6px 4px;
  border-top: 2px solid #e6e6e6;
  border-right: 1px solid #a0a0a0;
  background: #fafafa;
`;

const HThumb = styled.div`
  width: 2232px;
  height: 18px;
  border-radius: 9px;
  background: #b9b9b9;
`;

const HHandle = styled.div`
  width: 4px;
  height: 18px;
  margin: 6px 2px;
  background: #dcdcdc;
`;

const VScroll = styled.div`
  display: flex;
  flex-direction: column;
  width: 30px;
`;

const VHandle = styled.div`
  height: 4px;
  margin: 2px 6px;
  background: #dfdfdf;
`;

const VTrack = styled.div`
  flex: 1;
  padding: 4px 4px 0 6px;
  border-top: 1px solid #a0a0a0;
  border-left: 2px solid #e6e6e6;
  background: #fafafa;
`;

const VThumb = styled.div`
  width: 18px;
  height: 924px;
  border-radius: 9px;
  background: #b9b9b9;
`;

const SheetTabs = styled.nav`
  display: flex;
  align-items: flex-start;
  flex: none;
  height: 52px;
  border-top: 2px solid #cdcdcd;
  background: #f0f0f0;
`;

const SheetNav = styled.div`
  display: flex;
  align-items: center;
  gap: 32px;
  width: 122px;
  height: 42px;
  padding: 8px 0 0 30px;
  border-right: 2px solid #cdcdcd;
`;

const SheetTab = styled.button`
  width: ${(p) => (p.$wide ? 200 : 158)}px;
  height: 42px;
  padding-top: 6px;
  border-right: 2px solid #cdcdcd;
  font-size: 23px;
  font-weight: 500;
  color: #5c5c5c;

  ${(p) => p.$active && css`
    height: 42px;
    border-radius: 0 0 5px 5px;
    background: #fff;
    box-shadow: 0 -2px 0 #fff, 0 1px 2px #8a8a8a;
    font-weight: 700;
    color: #3f8550;
  `}
`;

const AddSheet = styled.button`
  display: flex;
  align-items: center;
  justify-content: center;
  width: 76px;
  height: 42px;
  padding-top: 4px;
  border-right: 2px solid #cdcdcd;
`;

const StatusBar = styled.footer`
  display: flex;
  align-items: center;
  flex: none;
  height: 46px;
  border-top: 2px solid #a2a2a2;
  background: linear-gradient(#e3e3e3, #d8d8d8);
  font-size: 24px;
  color: #4d4d4d;
`;

const Ready = styled.span`
  padding-left: 48px;
`;

const Access = styled.button`
  display: flex;
  align-items: center;
  gap: 6px;
  margin: 0 auto 0 38px;
`;

const ViewButton = styled.button`
  display: flex;
  align-items: center;
  justify-content: center;
  width: 72px;
  height: 44px;
  background: ${(p) => (p.$on ? '#a5a5a5' : 'none')};
`;

const ZoomButton = styled.button`
  display: flex;
  justify-content: center;
  width: 44px;
`;

const ZoomSlider = styled.input`
  appearance: none;
  width: 200px;
  height: 8px;
  border-radius: 4px;
  background: #9b9b9b;

  &::-webkit-slider-thumb {
    appearance: none;
    width: 32px;
    height: 32px;
    border-radius: 50%;
    background: #fff;
    box-shadow: 0 1px 3px rgba(0, 0, 0, 0.4);
  }
`;

const Percent = styled.span`
  width: 134px;
  padding-left: 22px;
  font-family: Lato, sans-serif;
  font-size: 25px;
`;

export default App;
